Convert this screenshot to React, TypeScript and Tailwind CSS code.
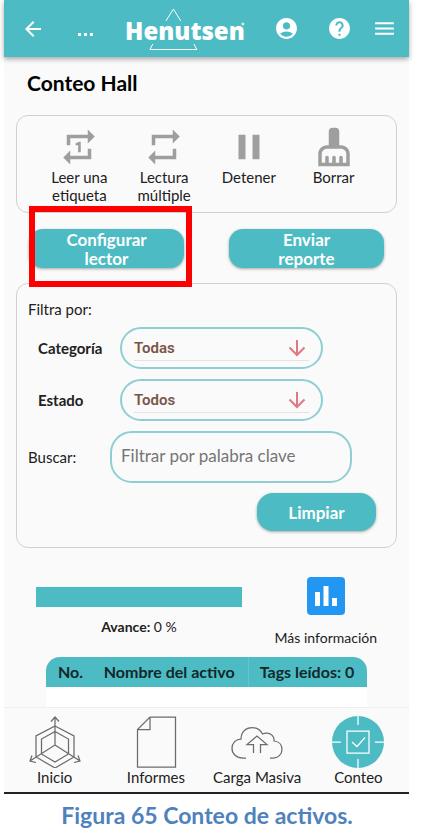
import React from "react";
import {
  MdAccountCircle,
  MdArrowBack,
  MdCleaningServices,
  MdHelp,
  MdMenu,
  MdPause,
  MdRepeat,
  MdRepeatOne,
} from "react-icons/md";

function Logo() {
  return (
    <div className="relative pt-1 text-white">
      <span className="block font-['Open_Sans',sans-serif] text-[24px] leading-[30px] font-extrabold">
        Henutsen
      </span>
      <svg
        className="absolute -top-1 left-0 h-[46px] w-full"
        viewBox="0 0 118 46"
        fill="none"
        stroke="currentColor"
        strokeWidth="1"
        aria-hidden="true"
      >
        <path d="M40 13 47.500 1 55 13M27 36l-3 5.500h47l-3-5.500" />
        <circle cx="117" cy="16" r="1" />
      </svg>
    </div>
  );
}

function Header() {
  return (
    <header className="flex h-[57px] items-center justify-between bg-[#4dbbc3] pr-3 pl-[17px] text-white shadow-[0_2px_5px_rgba(0,0,0,0.35)]">
      <div className="flex items-center gap-7">
        <button aria-label="Volver">
          <MdArrowBack size={24} />
        </button>
        <button aria-label="Más" className="flex w-6 justify-center gap-[3px] pt-3">
          <span className="size-[3px] bg-white" />
          <span className="size-[3px] bg-white" />
          <span className="size-[3px] bg-white" />
        </button>
        <Logo />
      </div>
      <div className="flex items-center gap-5">
        <button aria-label="Cuenta" className="mr-2">
          <MdAccountCircle size={25} />
        </button>
        <button aria-label="Ayuda">
          <MdHelp size={25} />
        </button>
        <button aria-label="Menú">
          <MdMenu size={25} />
        </button>
      </div>
    </header>
  );
}

function Tool({ icon, label }: { icon: React.ReactNode; label: string }) {
  return (
    <button className="flex flex-col items-center px-2">
      <span className="text-[#9e9e9e]">{icon}</span>
      <span className="text-[15px] leading-[18px]">{label}</span>
    </button>
  );
}

const primary =
  "block bg-[#4dbbc3] text-[17px] leading-[19px] font-bold text-white shadow-[0_1px_3px_rgba(0,0,0,0.35)]";

function FilterSelect({ id, label, value }: { id: string; label: string; value: string }) {
  return (
    <div className="flex items-center pl-[10px]">
      <label htmlFor={id} className="w-[82px] text-[15px] font-bold">
        {label}
      </label>
      <div className="relative h-[42px] w-[203px] rounded-full border-2 border-[#8fcfd3] px-3 pt-1">
        <select
          id={id}
          className="block h-7 w-full appearance-none border-b border-[#e4e4e4] bg-transparent pt-[3px] font-['Roboto',sans-serif] text-[15px] font-semibold text-[#795548] outline-none"
        >
          <option>{value}</option>
        </select>
        <svg
          className="pointer-events-none absolute top-[10px] right-[15px] h-[18px] w-[18px]"
          viewBox="0 0 18 18"
          fill="none"
          stroke="#e07880"
          strokeWidth="2"
          aria-hidden="true"
        >
          <path d="M9 1v15M1.500 8.500 9 16l7.500-7.500" />
        </svg>
      </div>
    </div>
  );
}

function NavItem({ label, children }: { label: string; children: React.ReactNode }) {
  return (
    <a href="#" className="flex flex-1 flex-col items-center pt-2">
      <svg
        width="52"
        height="52"
        viewBox="0 0 52 52"
        fill="none"
        stroke="#6b6b6b"
        strokeWidth="1.250"
        aria-hidden="true"
      >
        {children}
      </svg>
      <span className="text-[15px] leading-[18px] whitespace-nowrap">{label}</span>
    </a>
  );
}

export default function App() {
  return (
    <div className="bg-white font-['Lato',sans-serif] text-[#212121]">
      <main className="mr-3 ml-1 border-b-2 border-[#222] bg-[#fafafa]">
        <Header />
        <h1 className="px-[23px] pt-[14px] text-[21px] leading-6 font-bold text-black">
          Conteo Hall
        </h1>

        <section className="mx-3 mt-5 grid grid-cols-4 items-start rounded-xl border border-[#d0d0d0] px-5 pt-[10px] pb-2">
          <Tool icon={<MdRepeatOne size={42} />} label="Leer una etiqueta" />
          <Tool icon={<MdRepeat size={42} />} label="Lectura múltiple" />
          <Tool icon={<MdPause size={42} />} label="Detener" />
          <Tool icon={<MdCleaningServices size={42} />} label="Borrar" />
        </section>

        <div className="mx-[25px] mt-4 grid grid-cols-2 gap-[45px]">
          <div className="relative">
            <button className={`${primary} h-[39px] w-full rounded-[14px] px-8`}>
              Configurar lector
            </button>
            <div className="pointer-events-none absolute -top-[23px] -right-2 -bottom-[19px] left-0 border-[6px] border-[#fe0000]" />
          </div>
          <button className={`${primary} h-[39px] w-full rounded-[14px] px-12`}>
            Enviar reporte
          </button>
        </div>

        <section className="mx-3 mt-[15px] rounded-xl border border-[#d0d0d0] py-4 pr-[10px] pl-[11px]">
          <p className="text-[15px] leading-[18px]">Filtra por:</p>
          <div className="mt-[9px] flex flex-col gap-[10px]">
            <FilterSelect id="categoria" label="Categoría" value="Todas" />
            <FilterSelect id="estado" label="Estado" value="Todos" />
            <div className="flex items-center">
              <label htmlFor="buscar" className="w-[82px] text-[15px]">
                Buscar:
              </label>
              <input
                id="buscar"
                placeholder="Filtrar por palabra clave"
                className="h-[52px] w-[242px] rounded-[22px] border-2 border-[#8fcfd3] bg-transparent px-[9px] pb-1 text-[17px] outline-none placeholder:text-[#757575]"
              />
            </div>
            <button className={`${primary} mr-[10px] h-[38px] w-[119px] self-end rounded-[16px]`}>
              Limpiar
            </button>
          </div>
        </section>

        <section className="mt-[29px] flex items-start justify-between px-8">
          <div className="w-[206px] pt-[10px] text-center">
            <div
              role="progressbar"
              aria-label="Avance"
              aria-valuenow={0}
              className="h-[20px] bg-[#4dbbc3]"
            />
            <p className="mt-[11px] text-[14px] leading-[18px]">
              <b>Avance:</b> 0 %
            </p>
          </div>
          <button className="flex flex-col items-center">
            <svg width="38" height="38" viewBox="0 0 38 38" aria-hidden="true">
              <rect width="38" height="38" rx="4" fill="#2196f3" />
              <path d="M8 15h5v14H8zM16.500 9h5v20h-5zM25 21h5v8h-5z" fill="#fff" />
            </svg>
            <span className="mt-[14px] text-[14px] leading-[18px]">Más información</span>
          </button>
        </section>

        <div className="mx-[42px] mt-[10px] overflow-hidden rounded-t-[14px]">
          <table className="w-full table-fixed border-collapse bg-white text-left text-[16px] whitespace-nowrap text-[#12282b]">
            <thead className="bg-[#4dbbc3]">
              <tr className="h-[30px]">
                <th className="w-[18%] pl-3">No.</th>
                <th className="w-[45%] border-r border-[#66c4cb]">Nombre del activo</th>
                <th className="pl-[11px]">Tags leídos: 0</th>
              </tr>
            </thead>
            <tbody>
              <tr className="h-5">
                <td colSpan={3} />
              </tr>
            </tbody>
          </table>
        </div>

        <nav className="flex h-[85px] border-t border-[#eee]">
          <NavItem label="Inicio">
            <path d="M26 10 45 20v21L26 52 7 41V20zM26 15.500 39.500 23v15L26 46 12.500 38V23zM26 1v28L1 45M26 29l25 16M22 5.500 26 1l4 4.500M3 39.500 1 45l6 1.500M49 39.500l2 5.500-6 1.500" />
          </NavItem>
          <NavItem label="Informes">
            <path d="M20 1h25.500v50h-38V13.500zM20 1v12.500H7.500" />
          </NavItem>
          <NavItem label="Carga Masiva">
            <path d="M15 42h-3C5.500 42 1 38 1 32.500c0-5.500 4-9.500 9-9.500 0-7 5-11.500 11-11.500 5 0 8.500 2.500 10.500 6.500 6-2.500 12 1 11.500 7 5 .5 8 4 8 8.500 0 5-4 8.500-9 8.500h-3M22.500 37v-8.500H16L26 20l10 8.500h-6.500V37" />
          </NavItem>
          <NavItem label="Conteo">
            <circle cx="26" cy="26" r="26" fill="#4dbbc3" stroke="none" />
            <path
              stroke="#fff"
              d="M26 0v9M26 43v9M0 26h9M43 26h9M15 15h22v22H15zM20 26l5 4.500 8-9"
            />
          </NavItem>
        </nav>
      </main>
      <p className="pt-2 pr-[7px] pb-2 text-center text-[23px] leading-[27px] font-bold text-[#4f81bd]">
        Figura 65 Conteo de activos.
      </p>
    </div>
  );
}
